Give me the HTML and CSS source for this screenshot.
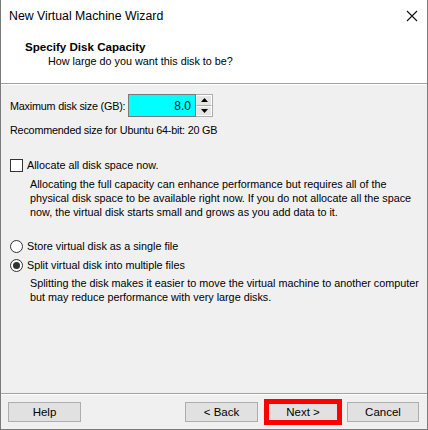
FILE: index.html
```html
<!DOCTYPE html>
<html>
<head>
<meta charset="utf-8">
<link rel="stylesheet" href="styles.css">
</head>
<body>
<div class="window">
  <div class="titlebar">
    <span class="title">New Virtual Machine Wizard</span>
    <svg class="close" width="12" height="12" viewBox="0 0 12 12"><path d="M1 1 L11 11 M11 1 L1 11" stroke="#111" stroke-width="1.1" fill="none"/></svg>
  </div>
  <div class="header">
    <div class="h-title">Specify Disk Capacity</div>
    <div class="h-sub">How large do you want this disk to be?</div>
  </div>
  <div class="sep"></div>
  <div class="content">
    <div class="size-row">
      <span class="label">Maximum disk size (GB):</span>
      <div class="spinbox">
        <div class="spin-input">8.0</div>
        <div class="spin-btns">
          <div class="spin-btn"><svg width="7" height="4" viewBox="0 0 7 4"><path d="M3.5 0 L7 4 L0 4 Z" fill="#000"/></svg></div>
          <div class="spin-btn"><svg width="7" height="4" viewBox="0 0 7 4"><path d="M0 0 L7 0 L3.5 4 Z" fill="#000"/></svg></div>
        </div>
      </div>
    </div>
    <div class="line rec">Recommended size for Ubuntu 64-bit: 20 GB</div>
    <div class="opt check-row"><span class="checkbox"></span><span>Allocate all disk space now.</span></div>
    <div class="desc desc1">Allocating the full capacity can enhance performance but requires all of the<br>physical disk space to be available right now. If you do not allocate all the space<br>now, the virtual disk starts small and grows as you add data to it.</div>
    <div class="opt radio-row1"><span class="radio"></span><span>Store virtual disk as a single file</span></div>
    <div class="opt radio-row2"><span class="radio checked"></span><span>Split virtual disk into multiple files</span></div>
    <div class="desc desc2">Splitting the disk makes it easier to move the virtual machine to another computer<br>but may reduce performance with very large disks.</div>
  </div>
  <div class="sep2"></div>
  <div class="footer">
    <button class="btn">Help</button>
    <div class="spacer"></div>
    <button class="btn back">&lt; Back</button>
    <button class="btn next">Next &gt;</button>
    <button class="btn cancel">Cancel</button>
  </div>
</div>
</body>
</html>
```
FILE: styles.css
```css
* { box-sizing: border-box; }
html, body { margin: 0; padding: 0; }
body {
  width: 428px;
  height: 430px;
  font-family: "Liberation Sans", Arial, sans-serif;
  font-size: 10.8px;
  color: #000;
  background: #fff;
  overflow: hidden;
}
.window {
  width: 428px;
  height: 430px;
  border-left: 1px solid #7a7a7a;
  border-right: 1px solid #7a7a7a;
  border-bottom: 1px solid #7a7a7a;
  display: flex;
  flex-direction: column;
  background: #f0f0f0;
  white-space: nowrap;
}
.titlebar {
  height: 31px;
  background: #fff;
  display: flex;
  align-items: center;
  justify-content: space-between;
  padding: 0 9px 0 8px;
  line-height: 14px;
}
.title { font-size: 12.3px; }
.close { display: block; margin-top: 0; }
.header {
  height: 52px;
  background: #fff;
  padding: 8px 0 0 24px;
  line-height: 15px;
}
.h-title { font-weight: bold; font-size: 11.6px; }
.h-sub { padding-left: 23px; }
.sep {
  height: 2px;
  border-top: 1px solid #a0a0a0;
  border-bottom: 1px solid #fff;
}
.content {
  flex: 1;
  padding: 9px 0 0 9px;
  line-height: 14px;
}
.size-row {
  display: flex;
  align-items: center;
  height: 23px;
}
.label { width: 118px; letter-spacing: -0.2px; }
.spinbox { display: flex; height: 23px; }
.spin-input {
  width: 68px;
  height: 23px;
  background: #00ffff;
  border: 1px solid #7a7a7a;
  text-align: right;
  padding: 4px 4px 0 0;
  font-size: 12px;
}
.spin-btns {
  display: flex;
  flex-direction: column;
  width: 17px;
  height: 23px;
  border: 1px solid #adadad;
  border-left: none;
  background: #e5e5e5;
}
.spin-btn {
  flex: 1;
  display: flex;
  align-items: center;
  justify-content: center;
  border: 1px solid #fff;
}
.spin-btn:first-child { border-bottom: 1px solid #adadad; }
.rec { margin-top: 6px; letter-spacing: -0.2px; }
.opt {
  display: flex;
  align-items: center;
  height: 14px;
}
.check-row { margin-top: 21px; }
.checkbox {
  width: 13px;
  height: 13px;
  border: 1px solid #333;
  background: #fff;
  margin-right: 4px;
}
.radio {
  width: 13px;
  height: 13px;
  border: 1px solid #333;
  border-radius: 50%;
  background: #fff;
  margin-right: 4px;
  display: flex;
  align-items: center;
  justify-content: center;
}
.radio.checked::after {
  content: "";
  width: 7px;
  height: 7px;
  border-radius: 50%;
  background: #333;
}
.desc { padding-left: 20px; }
.desc1 { margin-top: 5px; }
.radio-row1 { margin-top: 20px; }
.radio-row2 { margin-top: 5px; }
.desc2 { margin-top: 4px; }
.sep2 {
  height: 2px;
  border-top: 1px solid #a0a0a0;
  border-bottom: 1px solid #fff;
}
.footer {
  height: 34px;
  display: flex;
  align-items: flex-start;
  padding: 7px 8px 0 7px;
}
.spacer { flex: 1; }
.btn {
  font-family: inherit;
  font-size: 11.5px;
  width: 73px;
  height: 20px;
  border: 1px solid #adadad;
  background: #e1e1e1;
  color: #000;
  padding: 0;
  margin: 0;
  line-height: 16px;
}
.back { margin-right: 6px; }
.next {
  width: 78px;
  height: 26px;
  margin-top: -3px;
  margin-right: 5px;
  border: 5px solid #ff0000;
  line-height: 14px;
}
.cancel { width: 72px; }
```
